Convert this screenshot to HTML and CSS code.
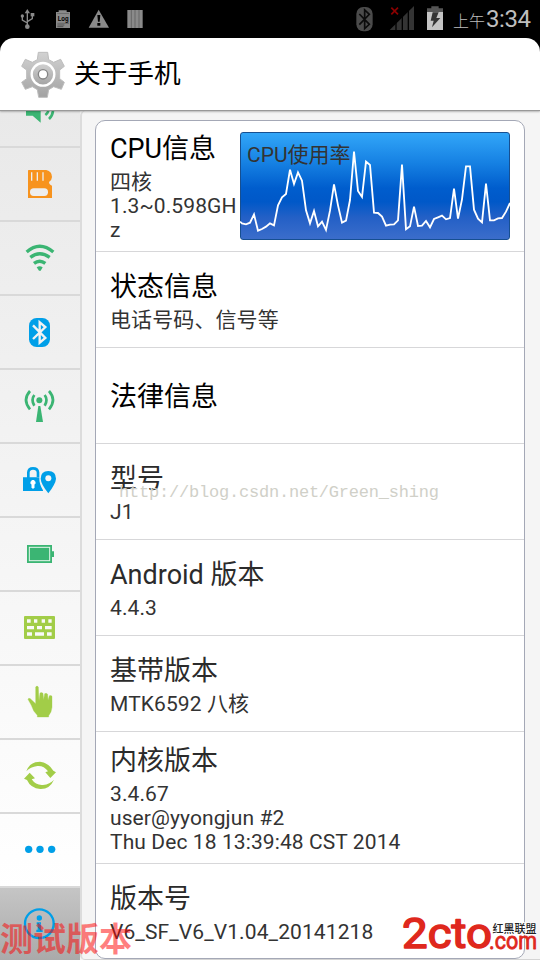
FILE: index.html
```html
<!DOCTYPE html>
<html lang="zh-CN">
<head>
<meta charset="utf-8">
<title>关于手机</title>
<link rel="stylesheet" href="styles.css">
</head>
<body>
<div class="phone">
  <div class="status">
    <svg class="status-left" viewBox="0 0 540 114">
      <g fill="none" stroke="#8a8a8a" stroke-width="4"><path d="M82 36V78M67 48V60L82 69M97 44V56L82 65"/></g>
      <g fill="#8a8a8a"><path d="M82 27L90 40H74Z"/><circle cx="82" cy="80" r="7"/><circle cx="67" cy="48" r="5"/><rect x="92" y="39" width="11" height="10"/>
      <path d="M168 36H176V31H200V36H210V84H168Z"/><path d="M296 29L327 83H266Z"/><path d="M382 30H428V84H382Z"/></g>
      <path d="M171 42H207M172 69H207M172 75H193M172 80H190" stroke="#333" stroke-width="2"/>
      <rect x="171" y="42" width="36" height="26" fill="#8a8a8a"/>
      <text x="173" y="62" textLength="33" lengthAdjust="spacingAndGlyphs" class="log">Log</text>
      <path d="M292 45H301L299 65H294ZM292 69H301V77H292Z" fill="#000"/>
      <path d="M394 30V84M405 30V84M417 30V84" stroke="#555" stroke-width="2"/>
    </svg>
    <div class="status-right">
      <svg class="status-icons" viewBox="240 0 300 114">
        <rect x="259" y="21" width="49" height="73" rx="21" fill="#4b4b4b"/>
        <path d="M268 42L298 73L284 86V30L298 43L268 74" fill="none" stroke="#0b0b0b" stroke-width="5"/>
        <path d="M432 18V90H359Z" fill="#343434"/>
        <path d="M378 60V90M397 40V90M415 20V90" stroke="#000" stroke-width="4"/>
        <path d="M364 23L384 43M384 23L364 43" stroke="#8b0000" stroke-width="5"/>
        <path d="M471 25H484V19H506V25H519V37H471Z" fill="#555"/><path d="M471 36H519V90H471Z" fill="#c4c4c4"/>
        <path d="M488 37H506L499 54H511L486 82L491 62H482Z" fill="#333"/>
      </svg>
      <span class="ampm">上午</span><span class="clock">3:34</span>
    </div>
  </div>
  <header class="header">
    <svg class="gear" viewBox="60 147 138 147">
      <defs><linearGradient id="g" x1="0" y1="0" x2="0" y2="1"><stop offset="0" stop-color="#d2d2d2"/><stop offset="1" stop-color="#a2a2a2"/></linearGradient></defs>
      <path d="M115 154H143L146 176L161 184L182 175L193 196L179 207V233L193 244L184 265L161 257L146 266L142 289H116L112 266L97 257L76 265L65 244L80 233V207L65 196L76 175L97 184L112 176Z" fill="url(#g)" stroke="#bdbdbd" stroke-width="3" stroke-linejoin="round"/>
      <circle cx="129" cy="220" r="34" fill="url(#g)" stroke="#fff" stroke-width="7"/>
      <circle cx="129" cy="220" r="14" fill="#fff" stroke="#858585" stroke-width="4"/>
    </svg>
    <h1>关于手机</h1>
  </header>
  <main class="main">
    <nav class="side">
      <div class="tab first"><svg viewBox="0 33 240 105" class="green"><path d="M78 33H122V68L98 47H78Z"/><path d="M145 33Q143 40 136 45M159 33Q157 48 147 57" class="line w8"/></svg></div>
      <div class="tab"><svg viewBox="0 144 240 216"><path d="M84 212Q84 210 86 210H139Q156 214 156 231Q156 239 147 246Q147 254 156 257V294H84Z" fill="#f7931e"/><rect x="90" y="265" width="54" height="23" rx="11" fill="#eee"/><path d="M95 217V242M112 217V242M129 217V242" stroke="#eee" stroke-width="4"/></svg></div>
      <div class="tab"><svg viewBox="0 366 240 216" class="green"><path d="M80 456Q119 422 160 456M91 472Q119 450 149 472M102 490Q119 477 136 490" class="line w10"/><path d="M110 502Q119 496 128 502L122 512H117Z"/></svg></div>
      <div class="tab"><svg viewBox="0 -12 240 216"><rect x="87" y="54" width="63" height="87" rx="23" fill="#009fe8"/><path d="M99 76L136 114L119 128V67L136 81L99 117" fill="none" stroke="#f2f2f2" stroke-width="7"/></svg></div>
      <div class="tab"><svg viewBox="0 210 240 216" class="green"><circle cx="118" cy="301" r="9"/><path d="M115 318H121L129 366H108Z"/><path d="M103 285Q92 300 103 317M134 285Q145 300 134 317M90 273Q66 300 90 328M147 273Q171 300 147 328" class="line w8"/></svg></div>
      <div class="tab"><svg viewBox="0 432 240 216" class="blue"><path d="M69 532H118Q117 552 129 571V573H69Z"/><path d="M85 534V517Q86 505 99 505Q113 505 114 517V531" class="line w8"/><path d="M145 513Q168 514 168 536Q167 551 145 580Q123 552 122 536Q122 514 145 513Z"/><circle cx="145" cy="535" r="9" fill="#f5f5f5"/><path d="M99 541A7 7 0 0 1 102 554V564H96V554A7 7 0 0 1 99 541Z" fill="#fff" stroke="#fff" stroke-width="3"/></svg></div>
      <div class="tab"><svg viewBox="0 -6 240 216" class="green"><path d="M81 75H156V94H162V111H156V129H81Z"/><rect x="88" y="82" width="61" height="40" fill="none" stroke="#e4f5eb" stroke-width="3"/></svg></div>
      <div class="tab"><svg viewBox="0 216 240 216"><rect x="72" y="288" width="93" height="69" rx="3" fill="#a2cd48"/><path d="M81 303H92M102 303H112M125 303H135M145 303H155M81 323H102M111 323H126M135 323H155M81 342H96M105 342H132M141 342H155" stroke="#f9f9f9" stroke-width="10"/></svg></div>
      <div class="tab"><svg viewBox="0 438 240 216"><path d="M107 501Q111 495 115 501L117 542L120 519Q124 516 129 520L131 539L134 521Q139 518 143 523L144 541L148 527Q154 525 156 529V562Q155 577 146 587V591H112V586Q99 574 94 556L84 538Q85 533 91 536L107 551Z" fill="#a2cd48" stroke="#a2cd48"/></svg></div>
      <div class="tab"><svg viewBox="0 0 240 216" fill="#a2cd48"><path d="M79 94Q89 65 120 65Q145 68 160 92L168 97L151 114L136 97L144 94Q131 76 112 78Q91 81 79 94Z"/><path d="M162 119Q149 148 121 147Q92 145 81 120L72 116L89 98L105 115L95 118Q108 137 129 135Q150 132 162 119Z"/></svg></div>
      <div class="tab"><svg viewBox="0 222 240 216" class="blue"><circle cx="86" cy="328" r="11"/><circle cx="120" cy="328" r="11"/><circle cx="155" cy="328" r="11"/></svg></div>
      <div class="tab active"><svg viewBox="0 444 240 216" class="blue"><circle cx="118" cy="551" r="43" class="line w6"/><circle cx="118" cy="534" r="8"/><path d="M110 547H123V569H128V576H109V569H113V553H110Z"/></svg></div>
    </nav>
    <section class="panel">
      <div class="card">
        <div class="row cpu">
          <div class="cpu-text"><h2>CPU信息</h2><p>四核<br>1.3~0.598GH<br>z</p></div>
          <div class="chart">
            <svg viewBox="30 36 810 324"><polyline points="30,305 36,310 48,313 60,308 72,283 84,332 96,327 108,320 120,310 132,316 144,256 156,232 168,222 180,149 192,192 204,157 216,182 228,271 240,310 252,273 264,319 276,305 288,330 300,272 312,193 324,256 336,308 348,302 360,240 372,95 384,213 396,231 408,125 420,135 432,278 444,279 456,290 468,317 480,314 492,313 504,301 516,134 528,328 540,319 552,260 564,318 576,317 588,303 600,322 612,297 624,292 636,287 648,298 660,294 672,206 684,296 696,238 708,139 720,139 732,269 744,296 756,307 768,191 780,301 792,301 804,295 816,294 828,275 840,249"/></svg>
            <span>CPU使用率</span>
          </div>
        </div>
        <div class="row"><h2>状态信息</h2><p>电话号码、信号等</p></div>
        <div class="row single"><h2>法律信息</h2></div>
        <div class="row dim"><h2>型号</h2><p>J1</p></div>
        <div class="row dim"><h2>Android 版本</h2><p>4.4.3</p></div>
        <div class="row dim"><h2>基带版本</h2><p>MTK6592 八核</p></div>
        <div class="row dim kernel"><h2>内核版本</h2><p>3.4.67<br>user@yyongjun #2<br>Thu Dec 18 13:39:48 CST 2014</p></div>
        <div class="row dim last"><h2>版本号</h2><p>V6_SF_V6_V1.04_20141218</p></div>
      </div>
    </section>
  </main>
  <svg class="overlay" viewBox="0 0 540 960">
    <text class="url" x="119" y="497" textLength="320">http://blog.csdn.net/Green_shing</text>
    <text class="test" x="0" y="951" textLength="132">测试版本</text>
    <text class="logo" x="402" y="948" textLength="90" lengthAdjust="spacingAndGlyphs">2cto</text>
    <text class="logo com" x="489" y="949" textLength="48" lengthAdjust="spacingAndGlyphs">.com</text>
    <text class="union" x="492.500" y="933" textLength="44" lengthAdjust="spacingAndGlyphs">红黑联盟</text>
  </svg>
</div>
</body>
</html>
```
FILE: styles.css
```css
* { box-sizing: border-box; }
body { margin: 0; background: #000; font-family: Roboto, "Noto Sans CJK SC", sans-serif; }
h1, h2, p { margin: 0; font-weight: 400; }
svg { display: block; }
.phone { position: relative; width: 540px; height: 960px; overflow: hidden; display: flex; flex-direction: column; background: #000; }
.status { height: 38px; display: flex; justify-content: space-between; flex: none; }
.status-left { width: 180px; height: 38px; }
.log { font: 700 19px "Liberation Sans", sans-serif; fill: #000; }
.status-right { display: flex; align-items: baseline; width: 190px; color: #bebebe; white-space: nowrap; }
.status-icons { width: 100px; height: 38px; align-self: flex-start; flex: none; }
.ampm { font-size: 16px; width: 33px; margin-left: 3px; font-weight: 300; line-height: 38px; }
.clock { font-size: 24px; line-height: 38px; letter-spacing: -0.4px; }
.header { height: 73px; flex: none; background: #fff; border-bottom: 1px solid #999; border-radius: 14px 14px 0 0; display: flex; align-items: center; padding-left: 20px; position: relative; box-shadow: 0 1px 2px rgba(0,0,0,.25); z-index: 1; }
.gear { width: 46px; height: 49px; }
h1 { font-size: 26.7px; line-height: 40px; margin-left: 8px; color: #000; }
.main { flex: 1; min-height: 0; display: flex; background: #f5f5f5; }
.side { width: 80px; flex: none; background: linear-gradient(#e9e9e9, #fff 92%); }
.tab { height: 74px; border-bottom: 2px solid #d9d9d9; }
.tab svg { width: 80px; height: 72px; }
.tab.first { height: 37px; }
.tab.first svg { height: 35px; }
.tab.active { height: 72px; border: 0; background: linear-gradient(#c5c5c5, #aaa); }
.green { fill: #3bb573; stroke: #3bb573; stroke-width: 0; }
.blue { fill: #009fe8; stroke: #009fe8; stroke-width: 0; }
.line { fill: none; }
.w6 { stroke-width: 7px; }
.w8 { stroke-width: 8px; }
.w10 { stroke-width: 10px; }
.panel { flex: 1; border-left: 2px solid #dcdcdc; border-bottom: 1px solid #d4d4d4; border-radius: 5px 0 0 5px; padding: 9px 15px 1px 13px; }
.card { height: 839px; background: #fff; border: 1px solid #a4a8b6; border-radius: 10px; overflow: hidden; }
.row { height: 96px; padding: 13px 14px 0; border-bottom: 1px solid #d7d7d9; color: #000; }
h2 { font-size: 27px; line-height: 44px; margin-bottom: -1px; }
p { font-size: 21px; line-height: 24px; letter-spacing: .1px; color: #333; white-space: nowrap; }
.row.cpu { height: 131px; padding-top: 6px; display: flex; }
.cpu-text { width: 130px; flex: none; }
.chart { width: 270px; height: 108px; margin-top: 5px; position: relative; border: 1px solid #164f91; border-radius: 3px; background: linear-gradient(#32a6f8, #1681e3 28%, #005dcd 52%, #0058c8 65%, #2460c6 80%, #3b6dcb); }
.chart svg { width: 270px; height: 108px; margin: -1px; }
.chart polyline { fill: none; stroke: #fff; stroke-width: 5.5px; }
.chart span { position: absolute; left: 6px; top: 7px; font-size: 21px; line-height: 30px; color: #333; }
.row.single { padding-top: 27px; }
.row.dim { color: #2b2b2b; }
.row.kernel { height: 132px; padding-top: 7px; }
.row.last { border: 0; }
.overlay { position: absolute; left: 0; top: 0; width: 540px; height: 960px; pointer-events: none; z-index: 2; }
.url { font: 17px "Liberation Mono", monospace; fill: #d0d0c8; }
.test { font-size: 33px; font-weight: 700; fill: #ff0000; fill-opacity: .5; }
.logo { font: 400 42px Roboto, sans-serif; fill: #df281d; stroke: #df281d; stroke-width: 1.5px; stroke-linejoin: round; }
.logo.com { font-size: 23px; stroke-width: .8px; }
.union { font-size: 11px; font-weight: 500; fill: #222; stroke: #fff; stroke-width: 1.5px; paint-order: stroke; }
```
